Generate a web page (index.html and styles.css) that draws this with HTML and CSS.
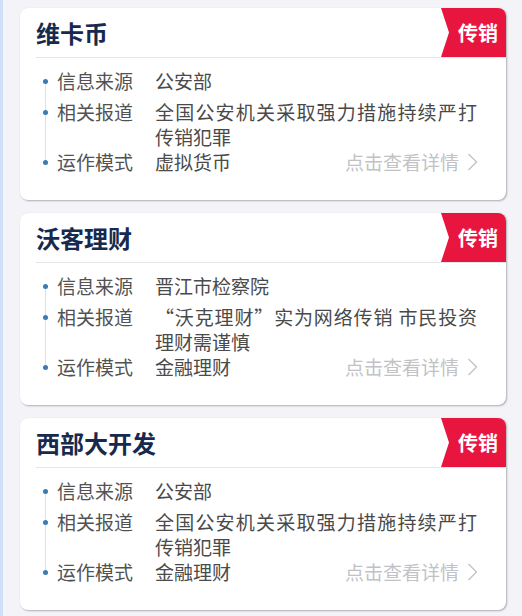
FILE: index.html
```html
<!DOCTYPE html>
<html lang="zh-CN">
<head>
<meta charset="utf-8">
<title>传销名单</title>
<link rel="stylesheet" href="styles.css">
</head>
<body>
<div class="page">
  <div class="card">
    <div class="card-head">
      <h2 class="card-title">维卡币</h2>
      <span class="badge">传销</span>
    </div>
    <ul class="info">
      <li class="row first"><span class="label">信息来源</span><span class="value">公安部</span></li>
      <li class="row"><span class="label">相关报道</span><span class="value">全国公安机关采取强力措施持续严打传销犯罪</span></li>
      <li class="row"><span class="label">运作模式</span><span class="value short">虚拟货币</span><a class="more">点击查看详情<svg class="chev" viewBox="0 0 11 18" width="11" height="18"><polyline points="1.5,1 9.5,9 1.5,17" fill="none" stroke="#c4c4c8" stroke-width="1.4"/></svg></a></li>
    </ul>
  </div>

  <div class="card">
    <div class="card-head">
      <h2 class="card-title">沃客理财</h2>
      <span class="badge">传销</span>
    </div>
    <ul class="info">
      <li class="row first"><span class="label">信息来源</span><span class="value">晋江市检察院</span></li>
      <li class="row"><span class="label">相关报道</span><span class="value">“沃克理财”实为网络传销 市民投资理财需谨慎</span></li>
      <li class="row"><span class="label">运作模式</span><span class="value short">金融理财</span><a class="more">点击查看详情<svg class="chev" viewBox="0 0 11 18" width="11" height="18"><polyline points="1.5,1 9.5,9 1.5,17" fill="none" stroke="#c4c4c8" stroke-width="1.4"/></svg></a></li>
    </ul>
  </div>

  <div class="card">
    <div class="card-head">
      <h2 class="card-title">西部大开发</h2>
      <span class="badge">传销</span>
    </div>
    <ul class="info">
      <li class="row first"><span class="label">信息来源</span><span class="value">公安部</span></li>
      <li class="row"><span class="label">相关报道</span><span class="value">全国公安机关采取强力措施持续严打传销犯罪</span></li>
      <li class="row"><span class="label">运作模式</span><span class="value short">金融理财</span><a class="more">点击查看详情<svg class="chev" viewBox="0 0 11 18" width="11" height="18"><polyline points="1.5,1 9.5,9 1.5,17" fill="none" stroke="#c4c4c8" stroke-width="1.4"/></svg></a></li>
    </ul>
  </div>
</div>
</body>
</html>
```
FILE: styles.css
```css
html, body {
  margin: 0;
  padding: 0;
}
body {
  background: #f3f3f8;
  font-family: "Noto Sans CJK SC", "Noto Sans", sans-serif;
  width: 522px;
  height: 616px;
  overflow: hidden;
}
.page {
  border-left: 3px solid #cfe0f6;
  min-height: 616px;
  box-sizing: border-box;
  padding: 8px 16px 0 17px;
  display: flex;
  flex-direction: column;
  gap: 13px;
}
.card {
  background: #fff;
  border-radius: 8px;
  height: 192px;
  flex: none;
  box-sizing: border-box;
  box-shadow: 1px 1px 2px rgba(0, 0, 0, 0.28), 0 0 1px rgba(0, 0, 0, 0.08);
  overflow: hidden;
}
.card-head {
  display: flex;
  align-items: center;
  height: 49px;
  margin-left: 16px;
  border-bottom: 1px solid #e6e6ea;
}
.card-title {
  margin: 0;
  font-size: 24px;
  font-weight: 700;
  color: #172a4e;
  line-height: 1;
}
.badge {
  margin-left: auto;
  align-self: stretch;
  width: 65px;
  background: #e8163f;
  color: #fff;
  font-size: 20px;
  font-weight: 700;
  display: flex;
  align-items: center;
  justify-content: flex-end;
  padding-right: 8px;
  box-sizing: border-box;
  clip-path: polygon(0 0, 100% 0, 100% 100%, 0 100%, 8px 50%);
}
.info {
  list-style: none;
  margin: 0;
  padding: 10px 28px 0 37px;
  position: relative;
  font-size: 19px;
  line-height: 25px;
  color: #4d4d4d;
}
.info::before {
  content: "";
  position: absolute;
  left: 25px;
  top: 23px;
  bottom: 12px;
  width: 1px;
  background: #dedee3;
}
.row {
  display: flex;
  position: relative;
}
.row::before {
  content: "";
  position: absolute;
  left: -14px;
  top: 11px;
  width: 5px;
  height: 5px;
  border-radius: 50%;
  background: #3a7bb4;
}
.row.first {
  margin-bottom: 6px;
}
.label {
  width: 76px;
  flex: none;
  margin-right: 22px;
  white-space: nowrap;
  color: #525252;
}
.value {
  width: 322px;
  flex: none;
  text-align: justify;
  color: #4a4a4a;
}
.value.short {
  width: auto;
  white-space: nowrap;
}
.more {
  margin-left: auto;
  color: #c2c2c6;
  display: flex;
  align-items: center;
  gap: 8px;
  white-space: nowrap;
}
.chev {
  display: block;
}
```
